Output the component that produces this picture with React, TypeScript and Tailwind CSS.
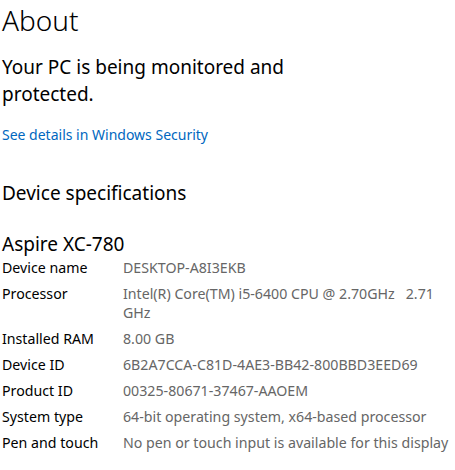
export default function App() {
  const specs: [string, React.ReactNode][] = [
    ["Device name", "DESKTOP-A8I3EKB"],
    [
      "Processor",
      <>
        <span className="whitespace-pre">Intel(R) Core(TM) i5-6400 CPU @ 2.70GHz   2.71</span>
        <br />
        GHz
      </>,
    ],
    ["Installed RAM", "8.00 GB"],
    ["Device ID", "6B2A7CCA-C81D-4AE3-BB42-800BBD3EED69"],
    ["Product ID", "00325-80671-37467-AAOEM"],
    ["System type", "64-bit operating system, x64-based processor"],
    ["Pen and touch", "No pen or touch input is available for this display"],
  ];

  return (
    <div className="w-[455px] h-[470px] overflow-hidden bg-white pl-[2px] text-black font-['Segoe_UI','Noto_Sans',sans-serif]">
      {/* Header */}
      <h1 className="text-[28px] leading-[40px] font-light">About</h1>

      <p className="mt-[14px] text-[19px] leading-[27px] w-[300px]">
        Your PC is being monitored and protected.
      </p>

      <a className="block mt-[16px] text-[14px] leading-[22px] text-[#0067c0]">
        See details in Windows Security
      </a>

      {/* Device specifications */}
      <h2 className="mt-[32px] text-[19px] leading-[30px]">Device specifications</h2>

      <h3 className="mt-[22px] text-[19px] leading-[28px]">Aspire XC-780</h3>

      <div className="flex flex-col gap-[7px] text-[14.2px] leading-[19px]">
        {specs.map(([label, value]) => (
          <div key={label} className="flex">
            <div className="w-[121px] shrink-0">{label}</div>
            <div className="text-[#666]">{value}</div>
          </div>
        ))}
      </div>

      <div className="mt-[18px] w-[91px] h-[32px] border-t-2 border-[#ccc]" />
    </div>
  );
}
